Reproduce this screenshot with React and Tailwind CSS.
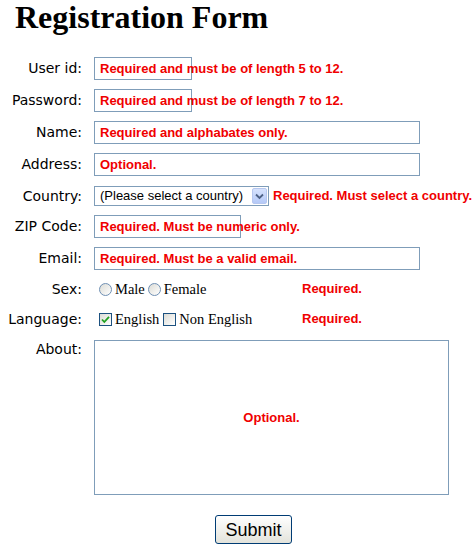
import React from "react";

const RED = "text-[#f00000] font-bold text-[13px] font-['Liberation_Sans',Arial,sans-serif] whitespace-nowrap";
const LABEL = "w-[82px] shrink-0 text-right text-[14px] leading-[17px] text-black font-['DejaVu_Sans',Verdana,sans-serif] whitespace-nowrap";

function Box({ w, msg }) {
  return (
    <div className={`${w} h-[23px] shrink-0 border border-[#7f9db9] bg-white flex items-center pl-[5px]`}>
      <span className={RED}>{msg}</span>
    </div>
  );
}

function Row({ label, children, className = "" }) {
  return (
    <div className={`flex items-center gap-x-3 ${className}`}>
      <div className={LABEL}>{label}</div>
      {children}
    </div>
  );
}

function Radio() {
  return (
    <span className="inline-block w-[13px] h-[13px] rounded-full border border-[#6f8fb3] bg-gradient-to-br from-[#dcdcd6] to-white shrink-0" />
  );
}

function Checkbox({ checked }) {
  return (
    <span className="inline-flex items-center justify-center w-[13px] h-[13px] border border-[#1c5180] bg-gradient-to-br from-[#dcdcd6] to-white shrink-0">
      {checked && (
        <svg width="9" height="9" viewBox="0 0 9 9">
          <path d="M1 4.5 L3.3 7 L8 1.8" fill="none" stroke="#21a121" strokeWidth="1.8" />
        </svg>
      )}
    </span>
  );
}

export default function App() {
  const serif = "font-['Liberation_Serif','Times_New_Roman',serif] text-[14.5px] text-black leading-[17px]";
  return (
    <div className="w-[474px] h-[548px] bg-white relative overflow-hidden">
      <h1 className="pl-[15px] text-[32px] leading-[34px] font-bold text-black font-['Liberation_Serif','Times_New_Roman',serif]">
        Registration Form
      </h1>
      <div className="flex flex-col mt-[23px]">
        <Row label="User id:" className="h-[23px] mb-[9px]">
          <Box w="w-[98px]" msg="Required and must be of length 5 to 12." />
        </Row>
        <Row label="Password:" className="h-[23px] mb-[9px]">
          <Box w="w-[98px]" msg="Required and must be of length 7 to 12." />
        </Row>
        <Row label="Name:" className="h-[23px] mb-[9px]">
          <Box w="w-[326px]" msg="Required and alphabates only." />
        </Row>
        <Row label="Address:" className="h-[23px] mb-[10px]">
          <Box w="w-[326px]" msg="Optional." />
        </Row>
        <Row label="Country:" className="h-[20px] mb-[9px]">
          <div className="flex items-center gap-x-[4px]">
            <div className="w-[175px] h-[20px] border border-[#7f9db9] bg-white flex items-center pl-[5px] pr-[1px]">
              <span className="flex-1 text-[13px] text-black font-['Liberation_Sans',Arial,sans-serif] whitespace-nowrap">
                (Please select a country)
              </span>
              <span className="w-[15px] h-[16px] flex items-center justify-center rounded-[2px] border border-[#b6c7ef] bg-gradient-to-b from-[#d6e2fd] to-[#b5c9f7]">
                <svg width="9" height="7" viewBox="0 0 9 7">
                  <path d="M1 1.5 L4.5 5 L8 1.5" fill="none" stroke="#4d6185" strokeWidth="1.8" />
                </svg>
              </span>
            </div>
            <span className={RED}>Required. Must select a country.</span>
          </div>
        </Row>
        <Row label="ZIP Code:" className="h-[23px] mb-[9px]">
          <Box w="w-[147px]" msg="Required. Must be numeric only." />
        </Row>
        <Row label="Email:" className="h-[23px]">
          <Box w="w-[326px]" msg="Required. Must be a valid email." />
        </Row>
        <Row label="Sex:" className="h-[20px] mt-[9px]">
          <div className="flex items-center">
            <div className="w-[208px] flex items-center pl-[5px]">
              <Radio />
              <span className={`${serif} ml-[3px]`}>Male</span>
              <span className="ml-[3px] flex"><Radio /></span>
              <span className={`${serif} ml-[3px]`}>Female</span>
            </div>
            <span className={RED}>Required.</span>
          </div>
        </Row>
        <Row label="Language:" className="h-[20px] mt-[10px]">
          <div className="flex items-center">
            <div className="w-[208px] flex items-center pl-[5px]">
              <Checkbox checked />
              <span className={`${serif} ml-[3px]`}>English</span>
              <span className="ml-[4px] flex"><Checkbox /></span>
              <span className={`${serif} ml-[3px]`}>Non English</span>
            </div>
            <span className={RED}>Required.</span>
          </div>
        </Row>
        <div className="flex items-start gap-x-3 mt-[11px]">
          <div className={`${LABEL} pt-[1px]`}>About:</div>
          <div className="w-[355px] h-[155px] border border-[#7f9db9] bg-white flex items-center justify-center">
            <span className={RED}>Optional.</span>
          </div>
        </div>
        <div className="pl-[215px] mt-[20px]">
          <button className="w-[77px] h-[29px] rounded-[3px] border border-[#003c74] bg-gradient-to-b from-white to-[#e3e3db] text-[18px] leading-none text-black font-['Liberation_Sans',Arial,sans-serif] flex items-center justify-center">
            Submit
          </button>
        </div>
      </div>
    </div>
  );
}
